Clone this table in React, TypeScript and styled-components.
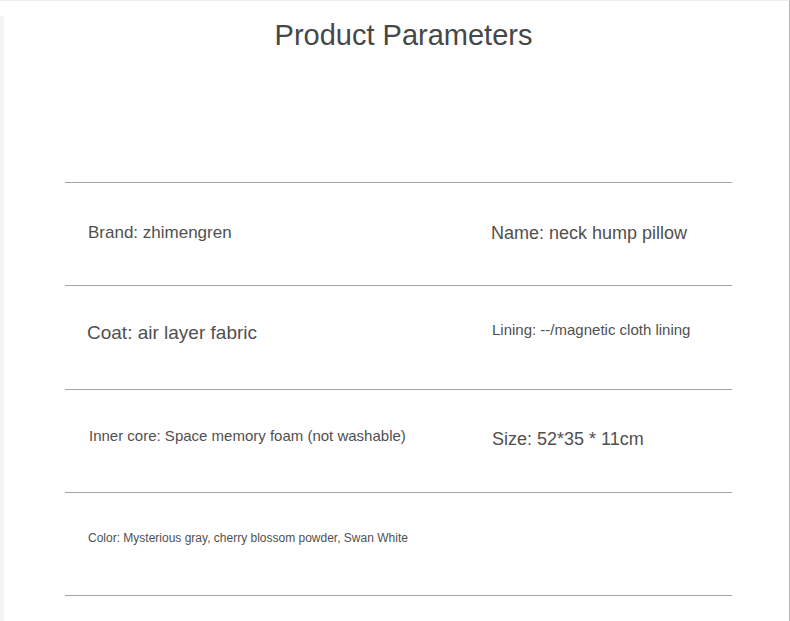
import React from "react";
import styled, { createGlobalStyle } from "styled-components";

const Global = createGlobalStyle`
  html, body { margin: 0; padding: 0; background: #ffffff; }
  body { font-family: "Liberation Sans", Arial, sans-serif; }
`;

const Page = styled.div`
  position: relative;
  width: 790px;
  height: 621px;
  box-sizing: border-box;
  border-top: 1px solid #ececec;
  border-right: 1px solid #b5b5b5;
  display: flex;
  overflow: hidden;
`;

const SideStrip = styled.div`
  width: 4px;
  margin-top: 15px;
  background: #f3f3f3;
  flex: none;
`;

const Content = styled.div`
  flex: 1;
  padding-left: 61px;
  display: flex;
  flex-direction: column;
`;

const Title = styled.h1`
  margin: 0;
  padding-top: 18px;
  width: 667px;
  padding-left: 10px;
  box-sizing: border-box;
  text-align: center;
  font-weight: 400;
  font-size: 29px;
  line-height: 32px;
  color: #474747;
  height: 181px;
`;

const Table = styled.div`
  width: 667px;
  border-bottom: 1px solid #a3a3a3;
`;

const Row = styled.div`
  display: grid;
  grid-template-columns: 403px 1fr;
  height: 102.25px;
  border-top: 1px solid #a3a3a3;
`;

const Cell = styled.div<{ $top: number; $size: number; $left: number }>`
  padding-top: ${(p) => p.$top}px;
  padding-left: ${(p) => p.$left}px;
  font-size: ${(p) => p.$size}px;
  line-height: 1.15;
  color: #505050;
  white-space: nowrap;
`;

type C = { text: string; top: number; size: number; left: number };

const rows: [C, C | null][] = [
  [
    { text: "Brand: zhimengren", top: 40, size: 17, left: 23 },
    { text: "Name: neck hump pillow", top: 40, size: 18, left: 23 },
  ],
  [
    { text: "Coat: air layer fabric", top: 36, size: 19, left: 22 },
    { text: "Lining: --/magnetic cloth lining", top: 35, size: 15, left: 24 },
  ],
  [
    { text: "Inner core: Space memory foam (not washable)", top: 37, size: 15, left: 24 },
    { text: "Size: 52*35 * 11cm", top: 39, size: 18, left: 24 },
  ],
  [
    { text: "Color: Mysterious gray, cherry blossom powder, Swan White", top: 39, size: 12, left: 23 },
    null,
  ],
];

export default function App() {
  return (
    <>
      <Global />
      <Page>
        <SideStrip />
        <Content>
          <Title>Product Parameters</Title>
          <Table>
            {rows.map(([a, b], i) => (
              <Row key={i}>
                <Cell $top={a.top} $size={a.size} $left={a.left}>{a.text}</Cell>
                {b ? (
                  <Cell $top={b.top} $size={b.size} $left={b.left}>{b.text}</Cell>
                ) : (
                  <div />
                )}
              </Row>
            ))}
          </Table>
        </Content>
      </Page>
    </>
  );
}
